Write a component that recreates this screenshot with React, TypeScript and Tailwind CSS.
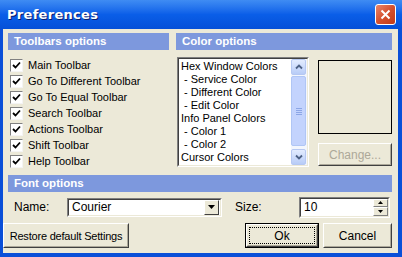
import React from "react";

const toolbars = [
  "Main Toolbar",
  "Go To Different Toolbar",
  "Go To Equal Toolbar",
  "Search Toolbar",
  "Actions Toolbar",
  "Shift Toolbar",
  "Help Toolbar",
];

const colorItems = [
  "Hex Window Colors",
  " - Service Color",
  " - Different Color",
  " - Edit Color",
  "Info Panel Colors",
  " - Color 1",
  " - Color 2",
  "Cursor Colors",
  " - Active Cursor",
];

const font = { fontFamily: '"Liberation Sans", Arial, sans-serif' };

const SectionHeader = ({ title, className = "" }: { title: string; className?: string }) => (
  <div
    className={`h-[17px] bg-[#7D98DD] pl-[6px] flex items-center text-white font-bold text-[11.5px] leading-none ${className}`}
  >
    {title}
  </div>
);

const Checkbox = () => (
  <span className="w-[13px] h-[13px] bg-white border border-t-[#808080] border-l-[#808080] border-b-[#f4f4f4] border-r-[#f4f4f4] flex items-center justify-center shrink-0">
    <svg width="9" height="9" viewBox="0 0 9 9">
      <path d="M1 4 L3.5 6.5 L8 1.5" stroke="#000" strokeWidth="1.8" fill="none" />
    </svg>
  </span>
);

const ScrollArrow = ({ up }: { up?: boolean }) => (
  <div className="h-[16px] w-[15px] rounded-[2px] bg-gradient-to-b from-[#E3ECFF] to-[#B8CCF7] border border-[#B6C8F2] flex items-center justify-center">
    <svg width="8" height="6" viewBox="0 0 8 6">
      <path
        d={up ? "M1 4.5 L4 1.5 L7 4.5" : "M1 1.5 L4 4.5 L7 1.5"}
        stroke="#4D6185"
        strokeWidth="1.8"
        fill="none"
      />
    </svg>
  </div>
);

const ClassicButton = ({
  children,
  className = "",
  disabled,
  isDefault,
  textClass = "text-[12px]",
}: {
  children: React.ReactNode;
  className?: string;
  disabled?: boolean;
  isDefault?: boolean;
  textClass?: string;
}) => (
  <div className={`${isDefault ? "border border-black" : ""} ${className}`}>
    <div className="h-full w-full bg-[#ECE9D8] border border-t-white border-l-white border-b-[#404040] border-r-[#404040]">
      <div
        className={`h-full w-full border border-t-[#ECE9D8] border-l-[#ECE9D8] border-b-[#ACA899] border-r-[#ACA899] flex ${
          isDefault ? "p-[1px]" : ""
        }`}
      >
        <div
          className={`flex-1 flex items-center justify-center whitespace-nowrap leading-[14px] ${textClass} ${
            isDefault ? "border border-dotted border-black" : ""
          } ${disabled ? "text-[#ACA899]" : "text-black"}`}
        >
          {children}
        </div>
      </div>
    </div>
  </div>
);

const Sunken = ({ children, className = "" }: { children: React.ReactNode; className?: string }) => (
  <div className={`border border-t-[#808080] border-l-[#808080] border-b-white border-r-white ${className}`}>
    <div className="h-full w-full border border-t-[#404040] border-l-[#404040] border-b-[#ECE9D8] border-r-[#ECE9D8] bg-white overflow-hidden">
      {children}
    </div>
  </div>
);

export default function App() {
  return (
    <div className="w-[402px] h-[257px] bg-[#0A4FD8] flex flex-col overflow-hidden" style={font}>
      {/* title bar */}
      <div className="h-[29px] shrink-0 bg-gradient-to-b from-[#3F8CF3] via-[#0A5EE8] to-[#0550D8] flex items-center pl-[7px] pr-[6px]">
        <span
          className="text-white font-bold text-[13px] tracking-[0.3px] [text-shadow:1px_1px_0_#0A1E6E]"
          style={{ fontFamily: '"DejaVu Sans", Verdana, sans-serif' }}
        >
          Preferences
        </span>
        <div className="ml-auto w-[21px] h-[21px] rounded-[3px] border border-white bg-gradient-to-br from-[#E9856A] via-[#D5502E] to-[#C23A16] flex items-center justify-center">
          <svg width="11" height="11" viewBox="0 0 11 11">
            <path d="M1.5 1.5 L9.5 9.5 M9.5 1.5 L1.5 9.5" stroke="#fff" strokeWidth="2" />
          </svg>
        </div>
      </div>

      {/* client */}
      <div className="ml-[3px] mr-[4px] h-[224px] bg-[#ECE9D8] flex flex-col text-[11px] text-black">
        <div className="h-[146px] pt-[4px] pl-[5px] pr-[6px] flex gap-[7px]">
          {/* toolbars */}
          <div className="w-[161px] flex flex-col">
            <SectionHeader title="Toolbars options" />
            <div className="mt-[7px] flex flex-col pl-[2px]">
              {toolbars.map((t) => (
                <div key={t} className="h-[16px] flex items-center gap-[5px]">
                  <Checkbox />
                  <span className="leading-none text-[11px]">{t}</span>
                </div>
              ))}
            </div>
          </div>

          {/* colors */}
          <div className="flex-1 flex flex-col">
            <SectionHeader title="Color options" />
            <div className="mt-[7px] flex">
              <Sunken className="w-[132px] h-[110px] ml-[1px]">
                <div className="flex h-full">
                  <div className="flex-1 pl-[2px] pt-[1px] overflow-hidden">
                    {colorItems.map((c) => (
                      <div key={c} className="h-[13px] leading-[13px] whitespace-pre text-[11px]">
                        {c}
                      </div>
                    ))}
                  </div>
                  <div className="w-[16px] bg-[#F3F6FD] flex flex-col">
                    <ScrollArrow up />
                    <div className="flex-1 py-[1px]">
                      <div className="h-[70px] w-[15px] rounded-[2px] bg-[#C3D3FD] border border-[#B0C6F5] flex flex-col items-center justify-center gap-[1px]">
                        <div className="w-[6px] h-[1px] bg-[#8CA6E6]" />
                        <div className="w-[6px] h-[1px] bg-[#8CA6E6]" />
                        <div className="w-[6px] h-[1px] bg-[#8CA6E6]" />
                        <div className="w-[6px] h-[1px] bg-[#8CA6E6]" />
                      </div>
                    </div>
                    <ScrollArrow />
                  </div>
                </div>
              </Sunken>
              <div className="ml-[9px] flex flex-col">
                <div className="mt-[3px] w-[74px] h-[74px] border border-black bg-[#ECE9D8]" />
                <ClassicButton disabled className="mt-[9px] w-[74px] h-[23px]">
                  Change...
                </ClassicButton>
              </div>
            </div>
          </div>
        </div>

        {/* font options */}
        <div className="px-[5px] pr-[6px]">
          <SectionHeader title="Font options" />
        </div>
        <div className="h-[30px] flex items-center pl-[11px]">
          <span className="w-[53px] text-[12px]">Name:</span>
          <Sunken className="w-[155px] h-[19px]">
            <div className="flex h-full items-center">
              <span className="flex-1 pl-[3px] text-[12px] leading-none">Courier</span>
              <div className="w-[15px] h-[15px] mr-[1px] bg-[#ECE9D8] border border-t-white border-l-white border-b-[#404040] border-r-[#404040] flex items-center justify-center">
                <svg width="7" height="4" viewBox="0 0 7 4">
                  <path d="M0 0 H7 L3.5 4 Z" fill="#000" />
                </svg>
              </div>
            </div>
          </Sunken>
          <span className="ml-[13px] w-[64px] text-[12px]">Size:</span>
          <Sunken className="w-[91px] h-[21px]">
            <div className="flex h-full items-center">
              <span className="flex-1 pl-[3px] text-[12px] leading-none">10</span>
              <div className="w-[15px] h-full flex flex-col">
                <div className="flex-1 bg-[#ECE9D8] border border-t-white border-l-white border-b-[#808080] border-r-[#808080] flex items-center justify-center">
                  <svg width="5" height="3" viewBox="0 0 5 3">
                    <path d="M0 3 H5 L2.5 0 Z" fill="#000" />
                  </svg>
                </div>
                <div className="flex-1 bg-[#ECE9D8] border border-t-white border-l-white border-b-[#808080] border-r-[#808080] flex items-center justify-center">
                  <svg width="5" height="3" viewBox="0 0 5 3">
                    <path d="M0 0 H5 L2.5 3 Z" fill="#000" />
                  </svg>
                </div>
              </div>
            </div>
          </Sunken>
        </div>

        {/* buttons */}
        <div className="mt-[1px] flex pr-[6px]">
          <ClassicButton className="w-[126px] h-[25px]" textClass="text-[11px] tracking-[-0.2px]">
            Restore default Settings
          </ClassicButton>
          <ClassicButton isDefault className="ml-auto w-[74px] h-[25px]">
            Ok
          </ClassicButton>
          <ClassicButton className="ml-[4px] w-[69px] h-[25px]">Cancel</ClassicButton>
        </div>
      </div>
    </div>
  );
}
